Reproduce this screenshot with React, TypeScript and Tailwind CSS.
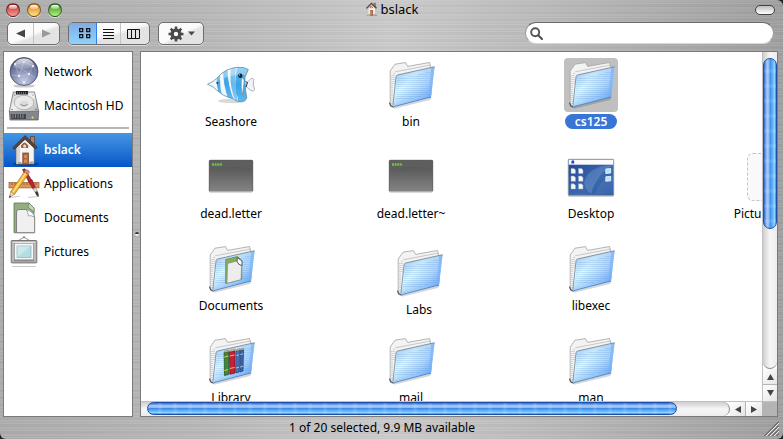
import type { ReactNode } from "react";

function NetworkIcon() {
  return (
    <svg viewBox="0 0 32 32" className="size-8 shrink-0" aria-hidden="true">
      <defs>
        <radialGradient id="globe" cx="0.5" cy="0.85" r="0.8">
          <stop offset="0" stopColor="#c3cae4" />
          <stop offset="0.5" stopColor="#8790b4" />
          <stop offset="1" stopColor="#4d5578" />
        </radialGradient>
        <linearGradient id="globeShine" x1="0" y1="0" x2="0" y2="1">
          <stop offset="0" stopColor="#fff" stopOpacity="0.85" />
          <stop offset="1" stopColor="#fff" stopOpacity="0.1" />
        </linearGradient>
      </defs>
      <ellipse cx="16" cy="30" rx="11" ry="1.6" fill="#000" opacity="0.2" />
      <circle cx="16" cy="15.5" r="14" fill="url(#globe)" stroke="#4a5068" strokeWidth="0.8" />
      <path d="M7 8 L16 6 L25 10 L21 18 L11 20 L7 8 L21 18 L27 22 M16 6 L11 20 L16 27 L21 18 M4 19 L11 20 M25 10 L28 15" stroke="#e4e8f6" strokeWidth="0.5" fill="none" opacity="0.55" />
      <path d="M5 11 Q7 2.5 16 2.5 Q25 2.5 27 11 Q16 15 5 11Z" fill="url(#globeShine)" />
      <g fill="#fff">
        <circle cx="7" cy="8" r="0.9" />
        <circle cx="16" cy="6" r="0.8" />
        <circle cx="25" cy="10" r="0.9" />
        <circle cx="21" cy="18" r="1.1" />
        <circle cx="11" cy="20" r="1.1" />
        <circle cx="16" cy="26.5" r="0.9" />
      </g>
    </svg>
  );
}

function DriveIcon() {
  return (
    <svg viewBox="0 0 32 32" className="size-8 shrink-0" aria-hidden="true">
      <defs>
        <linearGradient id="plate" x1="0" y1="0" x2="1" y2="1">
          <stop offset="0" stopColor="#c9c9c9" />
          <stop offset="0.5" stopColor="#f2f2f2" />
          <stop offset="1" stopColor="#adadad" />
        </linearGradient>
      </defs>
      <path d="M1.3 20.5 L30.7 20.5 L30.2 30 L2 30Z" fill="#83868a" stroke="#55585c" strokeWidth="0.7" />
      <path d="M5.3 2 L26.5 2 L30.7 21.5 L1.3 21.5Z" fill="url(#plate)" stroke="#707070" strokeWidth="0.8" />
      <path d="M8 1 H20 V4.5 H8Z" fill="#222" />
      <path d="M9.5 2 V4.5 M11.5 2 V4.5 M13.5 2 V4.5 M15.5 2 V4.5 M17.5 2 V4.5" stroke="#aaa" strokeWidth="0.5" />
      <ellipse cx="16" cy="12.5" rx="9.8" ry="7.2" fill="#e9e9e9" stroke="#a6a6a6" strokeWidth="0.8" />
      <ellipse cx="16" cy="14" rx="4.5" ry="3" fill="#dadada" />
      <path d="M12.5 14.5 Q16 17.2 19.5 14.5" fill="none" stroke="#777" strokeWidth="0.8" />
      <path d="M3 24 H18 V29 H3.4Z" fill="#404347" />
      <path d="M5 24 V28 M7.5 24 V28 M10 24 V28 M12.5 24 V28 M15 24 V28" stroke="#a2a5a8" strokeWidth="0.7" />
      <path d="M12 27.5 H16" stroke="#4367c9" strokeWidth="1.3" />
      <circle cx="24.5" cy="27.5" r="1" fill="#e8f24a" />
      <circle cx="6.8" cy="5" r="0.6" fill="#666" />
      <circle cx="25" cy="5" r="0.6" fill="#666" />
      <circle cx="4" cy="19.5" r="0.7" fill="#666" />
      <circle cx="28" cy="19.5" r="0.7" fill="#666" />
    </svg>
  );
}

function HomeIcon({ className }: { className: string }) {
  return (
    <svg viewBox="0 0 32 32" className={className} aria-hidden="true">
      <ellipse cx="18" cy="30" rx="13" ry="1.7" fill="#000" opacity="0.3" />
      <path d="M22.5 2.5 H26.5 V11 H22.5Z" fill="#a9826b" stroke="#5b3a2a" strokeWidth="0.7" />
      <path d="M8.5 14 L17 4.5 L26 14 V30 H8.5Z" fill="#f8f5f0" stroke="#8c8278" strokeWidth="0.6" />
      <path d="M8.5 14 L12 10 V30 H8.5Z" fill="#dcd7cf" />
      <path d="M17 1.5 L4.8 13.7 L6.4 15.5 L17 5.4 L27.7 15.2 L29.3 13.3Z" fill="#5a4438" stroke="#31231b" strokeWidth="0.5" />
      <path d="M13.5 13.5 V11.5 Q16.5 6.5 19.8 11.5 V13.5Z" fill="#a45b35" stroke="#62321b" strokeWidth="0.6" />
      <path d="M15.3 13.5 V11.6 Q16.6 9.5 18 11.6 V13.5Z" fill="#d9e6f2" />
      <rect x="14.8" y="19" width="5.6" height="11.2" fill="#b0673d" stroke="#6d3b20" strokeWidth="0.7" />
      <path d="M16 21 H19.2 V24 H16Z M16 25.5 H19.2 V28.8 H16Z" fill="#d18a5b" />
      <path d="M21.5 27.5 H25.5 V30 H21.5Z M10 28 H13.5 V30 H10Z" fill="#9c9488" opacity="0.8" />
    </svg>
  );
}

function ApplicationsIcon() {
  return (
    <svg viewBox="0 0 32 32" className="size-8 shrink-0" aria-hidden="true">
      <path d="M1 29.8 L12 28 M20 29.5 L30 28.5" stroke="#000" strokeWidth="1" opacity="0.2" />
      <path d="M14.5 1.5 L16.8 0.8 L24 13 L21 14.5Z" fill="#b72633" stroke="#6e1119" strokeWidth="0.6" />
      <rect x="1" y="14.5" width="30" height="5.4" fill="#e0955d" stroke="#9a5a30" strokeWidth="0.7" />
      <path d="M4 15 V17 M7 15 V17 M10 15 V17 M13 15 V17 M16 15 V17 M19 15 V17 M22 15 V17 M25 15 V17 M28 15 V17" stroke="#7a431f" strokeWidth="0.7" />
      <path d="M20.5 13.3 L24 11.6 L27.5 19.5 L25 21Z" fill="#b72633" stroke="#6e1119" strokeWidth="0.5" />
      <path d="M25 21 L27.5 19.5 L29.3 23 L27 24.3Z" fill="#d7d7dc" stroke="#777" strokeWidth="0.5" />
      <path d="M27 24.3 L29.3 23 Q31.3 26 30.7 29.3 Q27.6 27.5 27 24.3Z" fill="#44352c" />
      <path d="M16.2 4 L20.2 6.3 L6.7 26.2 L2.8 23.6Z" fill="#f3b72f" stroke="#9a6516" strokeWidth="0.6" />
      <path d="M17.8 5.2 L4.6 24.8" stroke="#ffe68b" strokeWidth="1.2" />
      <path d="M16.2 4 L17.6 1.9 Q20.5 1 21.6 4.1 L20.2 6.3Z" fill="#df8890" stroke="#8c5358" strokeWidth="0.5" />
      <path d="M2.8 23.6 L6.7 26.2 L1.3 29.6Z" fill="#f0d4ac" stroke="#8b6d43" strokeWidth="0.5" />
      <path d="M1.8 27.4 L3.1 28.4 L1.1 29.8Z" fill="#222" />
    </svg>
  );
}

function DocumentsIcon() {
  return (
    <svg viewBox="0 0 32 32" className="size-8 shrink-0" aria-hidden="true">
      <path d="M6 1 H21 L26 6 V30.7 H6Z" fill="#93ae80" stroke="#5d774f" strokeWidth="0.8" />
      <path d="M21 1 L26 6 V10 L20 5Z" fill="#c6d6ba" stroke="#5d774f" strokeWidth="0.6" />
      <path d="M8.5 10 Q8.5 7.5 11 7.5 H18.5 Q20 12 26.7 15 V30.7 H8.5Z" fill="#f0f0f0" stroke="#777" strokeWidth="0.9" />
      <path d="M18 7.5 Q25 9 26.7 15 Q23.5 13.3 20.3 13.8 Q20.3 9.5 18 7.5Z" fill="#fff" stroke="#888" strokeWidth="0.7" />
    </svg>
  );
}

function PicturesIcon() {
  return (
    <svg viewBox="0 0 32 32" className="size-8 shrink-0" aria-hidden="true">
      <path d="M10.5 4.5 L16 1 L21.5 4.5" fill="none" stroke="#777" strokeWidth="0.8" />
      <circle cx="16" cy="1.3" r="1.1" fill="#888" />
      <rect x="3.2" y="4.5" width="25.6" height="22.4" rx="0.8" fill="#b9b9b9" stroke="#6b6b6b" strokeWidth="0.9" />
      <path d="M5 6 H27 L24.5 8.5 H7.5Z" fill="#e8e8e8" />
      <path d="M5 25.5 H27 L24.5 23 H7.5Z" fill="#8f8f8f" />
      <rect x="6.5" y="7.5" width="19" height="16.3" fill="#f7f7f7" stroke="#878787" strokeWidth="0.6" />
      <rect x="9" y="10" width="14" height="11.3" fill="#b4dde2" stroke="#7aa2a8" strokeWidth="0.6" />
      <path d="M9.3 21 V10.3 H22.7Z" fill="#d3eef0" opacity="0.7" />
      <path d="M4 30.5 H28" stroke="#000" strokeWidth="1" opacity="0.2" />
    </svg>
  );
}

function FolderIcon({ children }: { children?: ReactNode }) {
  return (
    <svg viewBox="0 0 48 48" className="size-12" aria-hidden="true">
      <defs>
        <linearGradient id="folderFront" x1="0" y1="0.1" x2="1" y2="0.9">
          <stop offset="0" stopColor="#b4d8f6" />
          <stop offset="0.35" stopColor="#e2fcff" />
          <stop offset="0.65" stopColor="#b2d6fb" />
          <stop offset="1" stopColor="#5a9fee" />
        </linearGradient>
        <linearGradient id="folderShade" x1="0.4" y1="0" x2="0.6" y2="1">
          <stop offset="0" stopColor="#6f9fe8" stopOpacity="0.45" />
          <stop offset="0.5" stopColor="#8ec2fb" stopOpacity="0" />
          <stop offset="1" stopColor="#3d8cec" stopOpacity="0.45" />
        </linearGradient>
      </defs>
      <path d="M3 43.5 L6 46.2 L45 36 L43 39 L8 47.5 Q3 47 3 43.5Z" fill="#000" opacity="0.16" />
      <path d="M3.2 43 V10 L8 3.2 L18.5 1.6 L20.6 5.4 L42.5 1.5 L43.8 6.5 L44 34 L6 45.5Z" fill="#f3f3f3" stroke="#a2a2a2" strokeWidth="0.8" strokeLinejoin="round" />
      <path d="M8.2 10.8 L20.8 8.4 L43.5 4" fill="none" stroke="#b4b4b4" strokeWidth="0.7" />
      <path d="M5 14 V43 M7 12 V24" stroke="#999" strokeWidth="0.7" strokeDasharray="1 1" />
      <path d="M2.6 42 L3.6 44.8 L6.6 46" fill="none" stroke="#555" strokeWidth="1.2" strokeLinecap="round" />
      <path d="M10.5 14 Q9.2 14.3 9 16 L5.9 44.5 Q5.9 46 7 45.6 L44 36 L47.6 5.7Z" fill="url(#folderFront)" />
      <path d="M10.5 14 Q9.2 14.3 9 16 L5.9 44.5 Q5.9 46 7 45.6 L44 36 L47.6 5.7Z" fill="url(#folderShade)" />
      <path
        d="M10 17.5H43.5M10 19.5H43.5M9.5 21.5H43.3M9.5 23.5H43M9 25.5H42.7M9 27.5H42.4M9 29.5H42.2M8.5 31.5H42M8.5 33.5H41.5M8.5 35.5H34M8 37.5H27M22 15.5H43.6M31 13.5H43.8M38 11.5H44"
        stroke="#3f86de"
        strokeWidth="0.8"
        opacity="0.24"
      />
      <path d="M44.3 6.4 L47.6 5.7 L44 36 L41.4 36.7Z" fill="#72aff5" opacity="0.65" />
      <path d="M10.5 14 Q9.2 14.3 9 16 L5.9 44.5" fill="none" stroke="#6d8698" strokeWidth="0.8" />
      <path d="M10.5 14 L47.6 5.7" stroke="#6e7f8b" strokeWidth="0.8" />
      <path d="M7 45.6 L44 36" stroke="#3d77c0" strokeWidth="0.8" />
      {children}
    </svg>
  );
}

function DocumentsFolderIcon() {
  return (
    <FolderIcon>
      <path d="M18.7 14.5 L30.5 11.5 L34.8 15.5 V34 L18.7 38.5Z" fill="#84ab62" stroke="#658a48" strokeWidth="0.8" />
      <path d="M20.6 18.5 L30 16 Q31 20 34.6 20.4 L34 34.6 L20 38.3Z" fill="#ededed" stroke="#858585" strokeWidth="0.6" />
      <path d="M30.2 12.5 L35 16 V20.5 Q31 20 30.2 16.5Z" fill="#fff" stroke="#444" strokeWidth="0.8" />
    </FolderIcon>
  );
}

function LibraryFolderIcon() {
  return (
    <FolderIcon>
      <path d="M17 15.5 L21.5 14.5 L21.5 37.5 L17.5 38.5Z" fill="#3c8a3a" stroke="#1f4d20" strokeWidth="0.7" />
      <path d="M22.4 14.8 L28 13.6 L28 36 L22.8 37.2Z" fill="#c5203a" stroke="#6c0c1c" strokeWidth="0.7" />
      <path d="M29 14 L32.4 13.2 L32 35 L28.8 36Z" fill="#4a74b8" stroke="#21406f" strokeWidth="0.7" />
      <path d="M33 13.2 L36.6 12.4 L36 34 L32.8 35Z" fill="#3d62a6" stroke="#21406f" strokeWidth="0.7" />
      <path d="M17 15.5 L18 13.8 L22 13 L21.5 14.5Z M22.4 14.8 L23.3 13 L28.5 12 L28 13.6Z M29 14 L30 12.4 L33 11.8 L32.4 13.2Z M33 13.2 L34 11.6 L37 11 L36.6 12.4Z" fill="#d9cfae" stroke="#6b5f43" strokeWidth="0.4" />
      <path d="M17.3 20 L21.3 19 M17.4 33.5 L21.3 32.5 M22.8 19 L27.6 18 M22.8 31.5 L27.6 30.5" stroke="#e7ca49" strokeWidth="1" />
      <path d="M29.3 18.5 L32 17.8 M29 31 L32 30.2 M33.3 17.5 L36.2 16.8 M33 30 L36 29.2" stroke="#c5d7f2" strokeWidth="0.8" />
    </FolderIcon>
  );
}

function FishIcon() {
  return (
    <svg viewBox="0 0 48 48" className="size-12" aria-hidden="true">
      <defs>
        <linearGradient id="fishBlue" x1="0" y1="0" x2="0" y2="1">
          <stop offset="0" stopColor="#78c7f2" />
          <stop offset="0.5" stopColor="#38a3e6" />
          <stop offset="1" stopColor="#65bdf3" />
        </linearGradient>
        <clipPath id="fishBody">
          <path d="M0.5 23.3 Q7 20.5 9.5 17.5 Q18 7 31 6.3 Q37 5.8 41.3 8.5 Q40 12 38 16 Q37.5 24 39.8 37 Q38 41.5 31 40.5 Q27 39.5 26.5 38 Q16 35.5 9.5 29 Q7 25.5 0.5 23.3Z" />
        </clipPath>
      </defs>
      <ellipse cx="25" cy="40" rx="14" ry="2.2" fill="#000" opacity="0.15" />
      <path d="M37.5 24 L44 17.5 Q47.5 17 46.5 19.5 Q45.5 24 47.8 28.5 Q47 31 44 29.5 L38 25Z" fill="#f1f3f6" stroke="#9fa5ad" strokeWidth="0.8" />
      <g clipPath="url(#fishBody)">
        <path d="M0 0 H48 V48 H0Z" fill="#f3f7fa" />
        <path d="M10 4 Q8 24 13 36 L15.5 36 Q11.5 24 14 4Z" fill="url(#fishBlue)" />
        <path d="M16 4 Q15.5 24 22 40 L27.5 40 Q20 24 20.5 4Z" fill="url(#fishBlue)" />
        <path d="M24.5 4 Q21 21 28 39 L29.5 42 L31 41 Q26 22 29.5 4Z" fill="url(#fishBlue)" opacity="0.75" />
        <path d="M31 3 H43 V44 H29 Q33 39 29 33 Q27 16 31 3Z" fill="url(#fishBlue)" />
        <path d="M8 10 Q24 0 42 7 V14 Q22 12 8 22Z" fill="#fff" opacity="0.3" />
      </g>
      <path d="M0.5 23.3 Q7 20.5 9.5 17.5 Q18 7 31 6.3 Q37 5.8 41.3 8.5 Q40 12 38 16 Q37.5 24 39.8 37 Q38 41.5 31 40.5 Q27 39.5 26.5 38 Q16 35.5 9.5 29 Q7 25.5 0.5 23.3Z" fill="none" stroke="#5e8eab" strokeWidth="0.8" />
      <path d="M34.5 17 Q37.5 17 37 22 L35.5 34 Q33.5 27 34.5 17Z" fill="#fff" stroke="#7d8f9b" strokeWidth="0.7" />
      <circle cx="33.3" cy="14.7" r="2.2" fill="#16222c" />
      <circle cx="32.6" cy="14" r="0.6" fill="#fff" />
      <circle cx="10.3" cy="22" r="0.9" fill="#1e3850" />
      <path d="M38.5 20.5 L40.5 21.5 L39 26" fill="none" stroke="#1c2a70" strokeWidth="1" />
    </svg>
  );
}

function TerminalFileIcon() {
  return (
    <svg viewBox="0 0 48 48" className="size-12" aria-hidden="true">
      <defs>
        <linearGradient id="screen" x1="0" y1="0" x2="0" y2="1">
          <stop offset="0" stopColor="#4c4c4c" />
          <stop offset="1" stopColor="#848484" />
        </linearGradient>
      </defs>
      <rect x="2.5" y="37" width="43" height="3" rx="1" fill="#000" opacity="0.15" />
      <rect x="2.3" y="7.3" width="43.4" height="31" rx="0.8" fill="url(#screen)" stroke="#4b4b4b" strokeWidth="0.8" />
      <path d="M2.8 7.8 H45.2 V16 Q24 11.5 2.8 17.5Z" fill="#5e5e5e" />
      <path d="M5 11.5 H15.5" stroke="#6bd43e" strokeWidth="2.4" strokeDasharray="2 0.6" opacity="0.85" />
      <path d="M2.5 38.4 H45.5" stroke="#c9c9c9" strokeWidth="0.8" />
    </svg>
  );
}

function DesktopFileIcon() {
  return (
    <svg viewBox="0 0 48 48" className="size-12" aria-hidden="true">
      <defs>
        <linearGradient id="wallpaper" x1="0" y1="0" x2="1" y2="1">
          <stop offset="0" stopColor="#1f4692" />
          <stop offset="0.6" stopColor="#3c69ae" />
          <stop offset="1" stopColor="#24519c" />
        </linearGradient>
      </defs>
      <rect x="1" y="40" width="46" height="4" rx="1.5" fill="#000" opacity="0.18" />
      <rect x="1.3" y="6.3" width="45.4" height="36" rx="0.8" fill="url(#wallpaper)" stroke="#8b93a6" strokeWidth="0.9" />
      <path d="M17 30 Q20 15 40 12.5 H46 Q30 20 24 41 Q19 38 17 30Z" fill="#7ea5d8" opacity="0.35" />
      <path d="M28 41 Q33 26 46 22 V41Z" fill="#6f98d0" opacity="0.25" />
      <rect x="1.8" y="6.8" width="44.4" height="4.9" fill="#fbfbfb" />
      <path d="M4.5 7.8 Q6.3 6.6 7.2 8 V10.5 H4.3Z" fill="#2244dd" />
      <g fill="#f5f7fa" stroke="#97a5bb" strokeWidth="0.5">
        <path d="M4 15.5 H7 L8.5 17 V20.5 H4Z M11.5 15.5 H14.5 L16 17 V20.5 H11.5Z" />
        <path d="M4 23 H7 L8.5 24.5 V28.3 H4Z M11.5 23 H14.5 L16 24.5 V28.3 H11.5Z" />
        <path d="M4 30.8 H7 L8.5 32.3 V36 H4Z M11.5 30.8 H14.5 L16 32.3 V36 H11.5Z" />
      </g>
      <g fill="#b7e0fb" stroke="#eef8ff" strokeWidth="0.8">
        <path d="M38.8 16 L43.7 15.5 V20 L38.8 20.5Z" />
        <path d="M38.8 23.8 L43.7 23.3 V27.8 L38.8 28.3Z" />
      </g>
    </svg>
  );
}

function PreviewPlaceholder() {
  return <span className="block size-12 rounded-md border border-dashed border-[#c4c4c4] bg-[#f9f9f9]" />;
}

const places = [
  { name: "Network", icon: <NetworkIcon /> },
  { name: "Macintosh HD", icon: <DriveIcon /> },
];

const folders = [
  { name: "bslack", icon: <HomeIcon className="size-8 shrink-0" />, active: true },
  { name: "Applications", icon: <ApplicationsIcon /> },
  { name: "Documents", icon: <DocumentsIcon /> },
  { name: "Pictures", icon: <PicturesIcon /> },
];

type FileEntry = { name: string; icon: ReactNode; selected?: boolean; place?: string };

const files: FileEntry[] = [
  { name: "Seashore", icon: <FishIcon /> },
  { name: "bin", icon: <FolderIcon /> },
  { name: "cs125", icon: <FolderIcon />, selected: true },
  { name: "", icon: null },
  { name: "dead.letter", icon: <TerminalFileIcon /> },
  { name: "dead.letter~", icon: <TerminalFileIcon /> },
  { name: "Desktop", icon: <DesktopFileIcon /> },
  { name: "Picture 1.png", icon: <PreviewPlaceholder /> },
  { name: "Documents", icon: <DocumentsFolderIcon /> },
  { name: "Labs", icon: <FolderIcon />, place: "pt-1 pl-4" },
  { name: "libexec", icon: <FolderIcon /> },
  { name: "", icon: null },
  { name: "Library", icon: <LibraryFolderIcon /> },
  { name: "mail", icon: <FolderIcon /> },
  { name: "man", icon: <FolderIcon /> },
];

function SidebarItem({ name, icon, active }: { name: string; icon: ReactNode; active?: boolean }) {
  return (
    <li>
      <a
        href="#"
        className={
          active
            ? "flex h-[34px] items-center gap-1 bg-linear-to-b from-[#4596e3] to-[#0355c8] pl-1 font-semibold text-white"
            : "flex h-[34px] items-center gap-1 pl-1"
        }
      >
        {icon}
        <span className="whitespace-nowrap">{name}</span>
      </a>
    </li>
  );
}

function FileItem({ name, icon, selected, place = "" }: FileEntry) {
  if (!name) return <div />;
  return (
    <div className={`flex justify-center ${place}`}>
      <button type="button" className="flex flex-col items-center gap-0.5 self-start">
        <span className={selected ? "rounded-sm bg-[#c0c0c0] p-[3px]" : "p-[3px]"}>{icon}</span>
        <span
          className={
            selected
              ? "rounded-full bg-[#3875d7] px-2.5 leading-[15px] font-semibold whitespace-nowrap text-white"
              : "px-2.5 leading-[15px] whitespace-nowrap"
          }
        >
          {name}
        </span>
      </button>
    </div>
  );
}

function TrafficLight({ label, color }: { label: string; color: string }) {
  return (
    <button
      type="button"
      aria-label={label}
      className={`flex size-3.5 justify-center rounded-full border border-black/50 pt-px shadow-[0_1px_0_#e4e4e4] ${color}`}
    >
      <span className="h-1 w-2 rounded-full bg-linear-to-b from-white to-white/30" />
    </button>
  );
}

const bezel = "flex h-[23px] overflow-hidden rounded-[5px] border border-[#6e6e6e] bg-linear-to-br from-[#fbfbfb] from-50% to-[#e3e3e3] to-60% shadow-[0_1px_0_#dcdcdc]";

function Toolbar() {
  return (
    <div className="flex h-[29px] items-start gap-2 pr-[9px] pl-[7px]">
      <div className={`${bezel} w-[53px]`}>
        <button type="button" aria-label="Back" className="flex flex-1 items-center justify-center border-r border-[#c4c4c4]">
          <svg viewBox="0 0 9 9" className="size-[9px]"><path d="M0 4.5 L9 0.5 V8.5Z" fill="#444" /></svg>
        </button>
        <button type="button" aria-label="Forward" className="flex flex-1 items-center justify-center">
          <svg viewBox="0 0 9 9" className="size-[9px]"><path d="M9 4.5 L0 0.5 V8.5Z" fill="#999" /></svg>
        </button>
      </div>
      <div className={`${bezel} w-[82px]`}>
        <button type="button" aria-label="Icon view" className="flex w-7 items-center justify-center border-r border-[#2f80e8] bg-linear-to-b from-[#7fade6] to-[#8ed3fb] pl-1">
          <svg viewBox="0 0 12 11" className="h-[11px] w-3" fill="none" stroke="#111" strokeWidth="1.3">
            <path d="M0.7 0.7h3v3h-3z M7.7 0.7h3v3h-3z M0.7 6.7h3v3h-3z M7.7 6.7h3v3h-3z" />
          </svg>
        </button>
        <button type="button" aria-label="List view" className="flex w-6 items-center justify-center border-r border-[#c4c4c4]">
          <svg viewBox="0 0 11 10" className="h-2.5 w-[11px]" stroke="#111">
            <path d="M0 0.5H11M0 3.5H11M0 6.5H11M0 9.5H11" />
          </svg>
        </button>
        <button type="button" aria-label="Column view" className="flex flex-1 items-center justify-center pr-1">
          <svg viewBox="0 0 13 10" className="h-2.5 w-[13px] shrink-0" fill="none" stroke="#111">
            <path d="M0.5 0.5h12v9h-12zM4.5 0.5v9M8.5 0.5v9" />
          </svg>
        </button>
      </div>
      <button type="button" aria-label="Action" className={`${bezel} w-[46px] items-center justify-center gap-1`}>
        <svg viewBox="0 0 16 16" className="size-4" fill="none" stroke="#4a4a4a">
          <circle cx="8" cy="8" r="3.9" strokeWidth="3.4" />
          <path d="M8 0.5V3.2M8 12.8V15.5M0.5 8H3.2M12.8 8H15.5M2.7 2.7L4.6 4.6M11.4 11.4L13.3 13.3M13.3 2.7L11.4 4.6M4.6 11.4L2.7 13.3" strokeWidth="2.6" />
        </svg>
        <svg viewBox="0 0 7 5" className="h-[5px] w-[7px]"><path d="M0 0.5H7L3.5 4.5Z" fill="#4a4a4a" /></svg>
      </button>
      <label className="ml-auto flex h-[22px] w-[249px] items-center gap-1 rounded-full border border-x-[#a0a0a0] border-t-[#6a6a6a] border-b-[#d8d8d8] bg-white px-1">
        <svg viewBox="0 0 13 13" className="size-[13px] shrink-0" fill="none" stroke="#555">
          <circle cx="5.2" cy="5.2" r="4" strokeWidth="1.9" />
          <path d="M8.2 8.2L12 12" strokeWidth="2.2" strokeLinecap="round" />
        </svg>
        <input type="search" aria-label="Search" className="min-w-0 flex-1 bg-transparent outline-none" />
      </label>
    </div>
  );
}

const arrowButton = "flex shrink-0 items-center justify-center bg-linear-to-br from-white to-[#e4e4e4]";

function VerticalScrollbar() {
  return (
    <div className="flex w-[15px] shrink-0 flex-col border-l border-[#c0c0c0]">
      <div className="min-h-0 flex-1 rounded-b-full border-b border-[#888] bg-linear-to-r from-[#cfcfcf] via-[#f6f6f6] to-[#ededed] pt-1.5">
        <div className="h-[55%] rounded-full border border-[#1c4fae] bg-[repeating-linear-gradient(180deg,#ffffff00_0_9px,#ffffff26_12px,#ffffff00_15px),linear-gradient(90deg,#2a67cf,#a9cbf6_25%,#8cbaf3_42%,#3f8deb_50%,#68b6fb_75%,#8cd6ff_88%,#3d7fd0)]" />
      </div>
      <button type="button" aria-label="Scroll up" className={`${arrowButton} h-4 border-b border-[#b5b5b5]`}>
        <svg viewBox="0 0 7 6" className="h-1.5 w-[7px]"><path d="M3.5 0L7 6H0Z" fill="#444" /></svg>
      </button>
      <button type="button" aria-label="Scroll down" className={`${arrowButton} h-4`}>
        <svg viewBox="0 0 7 6" className="h-1.5 w-[7px]"><path d="M3.5 6L7 0H0Z" fill="#444" /></svg>
      </button>
    </div>
  );
}

function HorizontalScrollbar() {
  return (
    <div className="flex h-[15px] shrink-0 border-t border-[#c0c0c0]">
      <div className="min-w-0 flex-1 rounded-r-full border-r border-[#888] bg-linear-to-b from-[#cfcfcf] via-[#f6f6f6] to-[#ededed] pl-1.5">
        <div className="h-[13px] w-[91%] rounded-full border border-[#1c4fae] bg-[repeating-linear-gradient(90deg,#ffffff00_0_9px,#ffffff26_12px,#ffffff00_15px),linear-gradient(180deg,#2a67cf,#a9cbf6_25%,#8cbaf3_42%,#3f8deb_50%,#68b6fb_75%,#8cd6ff_88%,#3d7fd0)]" />
      </div>
      <button type="button" aria-label="Scroll left" className={`${arrowButton} w-4 border-r border-[#b5b5b5]`}>
        <svg viewBox="0 0 6 7" className="h-[7px] w-1.5"><path d="M0 3.5L6 0V7Z" fill="#444" /></svg>
      </button>
      <button type="button" aria-label="Scroll right" className={`${arrowButton} w-4`}>
        <svg viewBox="0 0 6 7" className="h-[7px] w-1.5"><path d="M6 3.5L0 0V7Z" fill="#444" /></svg>
      </button>
      <div className="w-[15px] shrink-0 bg-[#b4b4b4]" />
    </div>
  );
}

export default function App() {
  return (
    <div className="h-screen bg-[#222] font-['Noto_Sans','Lucida_Grande',sans-serif] text-xs text-black">
      <div className="flex h-full flex-col overflow-hidden rounded-md rounded-tl-none bg-[repeating-linear-gradient(180deg,#ffffff0a_0_2px,#00000005_2px_3px,#ffffff12_3px_4px,#00000006_4px_7px),linear-gradient(90deg,#adadad,#b8b8b8_25%,#cbcbcb_50%,#b6b6b6_75%,#a0a0a0)]">
        <header className="grid h-[22px] shrink-0 grid-cols-[1fr_auto_1fr] items-start px-1.5">
          <div className="flex gap-[7px] pt-[3px]">
            <TrafficLight label="Close" color="bg-linear-to-b from-[#b3222b] to-[#ff9a94]" />
            <TrafficLight label="Minimize" color="bg-linear-to-b from-[#d8761c] to-[#ffe67a]" />
            <TrafficLight label="Zoom" color="bg-linear-to-b from-[#2f8a18] to-[#b0f77c]" />
          </div>
          <h1 className="flex items-center gap-0.5 text-[13px] leading-[18px]">
            <HomeIcon className="size-3.5" />
            bslack
          </h1>
          <button type="button" aria-label="Toggle toolbar" className="mt-[5px] mr-0.5 h-2.5 w-5 justify-self-end rounded-full border border-[#444] bg-linear-to-b from-[#bdbdbd] to-white" />
        </header>
        <Toolbar />
        <main className="flex min-h-0 flex-1 pr-[5px] pl-[3px]">
          <nav className="w-[130px] shrink-0 border border-[#7a7a7a] bg-white pt-[3px]">
            <ul>
              {places.map((item) => (
                <SidebarItem key={item.name} {...item} />
              ))}
            </ul>
            <hr className="mx-[3px] my-1 border-t-2 border-[#b5b5b5]" />
            <ul>
              {folders.map((item) => (
                <SidebarItem key={item.name} {...item} />
              ))}
            </ul>
          </nav>
          <div className="flex w-[7px] shrink-0 items-center justify-center">
            <span className="size-1 rounded-full border-t-2 border-[#333] bg-[#eee]" />
          </div>
          <section className="flex min-w-0 flex-1 flex-col border border-[#7a7a7a] bg-white">
            <div className="flex min-h-0 flex-1">
              <div className="grid min-w-0 flex-1 auto-rows-[92px] grid-cols-[repeat(4,180px)] overflow-hidden pt-1.5">
                {files.map((file, i) => (
                  <FileItem key={i} {...file} />
                ))}
              </div>
              <VerticalScrollbar />
            </div>
            <HorizontalScrollbar />
          </section>
        </main>
        <footer className="flex h-[22px] shrink-0 items-center pr-1">
          <p className="flex-1 text-center">1 of 20 selected, 9.9 MB available</p>
          <svg viewBox="0 0 15 15" className="size-[15px]" aria-hidden="true">
            <path d="M0.5 15L15 0.5M4.5 15L15 4.5M8.5 15L15 8.5M12.5 15L15 12.5" stroke="#444" />
            <path d="M2 15L15 2M6 15L15 6M10 15L15 10" stroke="#eee" />
          </svg>
        </footer>
      </div>
    </div>
  );
}
